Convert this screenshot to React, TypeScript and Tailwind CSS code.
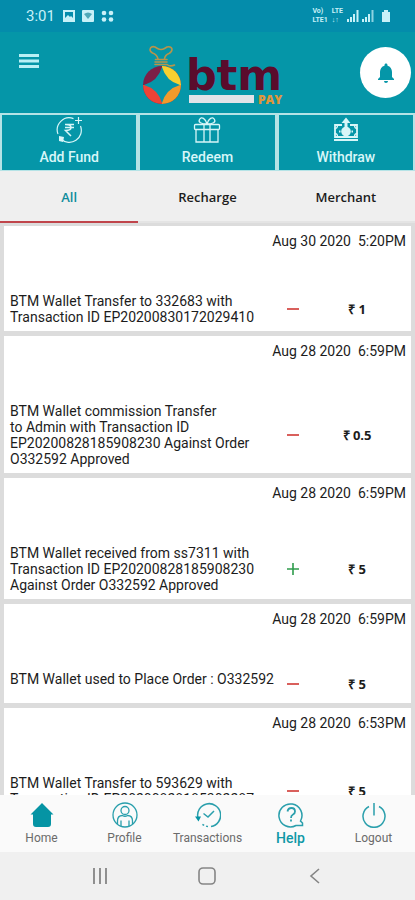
import { useState } from "react"
import type { ReactNode } from "react"
import { MdNotifications } from "react-icons/md"

interface Transaction {
    id: number;
    date: string;
    time: string;
    lines: string[];
    type: "debit" | "credit";
    amount: string;
}

const transactions: Transaction[] = [
    {
        id: 1,
        date: "Aug 30 2020",
        time: "5:20PM",
        lines: ["BTM Wallet Transfer to 332683 with", "Transaction ID EP20200830172029410"],
        type: "debit",
        amount: "1"
    },
    {
        id: 2,
        date: "Aug 28 2020",
        time: "6:59PM",
        lines: [
            "BTM Wallet commission Transfer",
            "to Admin with Transaction ID",
            "EP20200828185908230 Against Order",
            "O332592 Approved"
        ],
        type: "debit",
        amount: "0.5"
    },
    {
        id: 3,
        date: "Aug 28 2020",
        time: "6:59PM",
        lines: [
            "BTM Wallet received from ss7311 with",
            "Transaction ID EP20200828185908230",
            "Against Order O332592 Approved"
        ],
        type: "credit",
        amount: "5"
    },
    {
        id: 4,
        date: "Aug 28 2020",
        time: "6:59PM",
        lines: ["BTM Wallet used to Place Order : O332592"],
        type: "debit",
        amount: "5"
    },
    {
        id: 5,
        date: "Aug 28 2020",
        time: "6:53PM",
        lines: ["BTM Wallet Transfer to 593629 with", "Transaction ID EP20200828185302287"],
        type: "debit",
        amount: "5"
    }
]

const tabs: string[] = ["All", "Recharge", "Merchant"]

const StatusBar = () => (
    <div className="flex h-8 shrink-0 items-center justify-between bg-[#048cab] pl-[26px] pr-6 text-[#c8f1f8]">
        <div className="flex items-center gap-2">
            <span className="text-[15px] leading-4">3:01</span>
            <svg width="52" height="14" viewBox="0 0 52 14" fill="currentColor">
                <path fillRule="evenodd" d="M0 1h12v12H0zM2 3v6l3-3 2 2 1-1 2 2V3z" />
                <rect x="19" y="1" width="12" height="12" rx="1" />
                <path d="M21 5q4-3 8 0l-4 5z" fill="#4fa9b8" />
                <circle cx="41" cy="4" r="2.3" />
                <circle cx="48" cy="4" r="2.3" />
                <circle cx="41" cy="10.5" r="2.3" />
                <circle cx="48" cy="10.5" r="2.3" />
            </svg>
        </div>
        <div className="flex items-center gap-1">
            <div className="grid grid-cols-[auto_auto] gap-x-1 text-[7px] font-bold leading-[9px]">
                <span>Vo)</span>
                <span>LTE</span>
                <span>LTE1</span>
                <span>↓↑</span>
            </div>
            <svg width="44" height="14" viewBox="0 0 44 14" fill="currentColor">
                <path d="M0 10h2v3H0zM3 8h2v5H3zM6 5h2v8H6zM9.5 1h2v12h-2z" />
                <path d="M15 10h2v3h-2zM18 8h2v5h-2zM21 5h2v8h-2z" />
                <path d="M24.5 1h2v12h-2z" opacity=".7" />
                <path d="M37 1h4v2h2v10h-8V3h2z" />
            </svg>
        </div>
    </div>
)

const Logo = () => (
    <svg width="142" height="62" viewBox="0 0 142 62" className="mt-[6px]" role="img" aria-label="btm pay">
        {/* money bag */}
        <g fill="none" stroke="#b8944a" strokeWidth="1.6" strokeLinecap="round" strokeLinejoin="round">
            <path d="M16 14 Q15 9.5 10.5 8 Q7 6 8.5 3 Q10 1 13 2 L15.5 3.5 Q19 5.5 22.5 3.5 L25 2 Q29 1 30 4 Q30 7 27 8.5 Q23 10 22.5 14" />
            <path d="M13.5 14.5H25 M13 17H25 M13 19.5H25 Q28 22 32.5 20" />
        </g>
        <circle cx="20" cy="40" r="19" fill="#7c1f47" />
        <path d="M20 21A19 19 0 0 1 39 40H20z" fill="#f8d030" />
        <path d="M1 40A19 19 0 0 0 20 59V40z" fill="#ee4336" />
        <path d="M39 40A19 19 0 0 1 20 59V40z" fill="#f29a2b" />
        <path d="M20 22Q24 36 38 40Q24 44 20 58Q16 44 2 40Q16 36 20 22z" fill="#0596a8" />
        <text x="44" y="45" className="font-['DejaVu_Sans'] text-[43px] font-bold" fill="#5a0c2c">
            btm
        </text>
        <rect x="47" y="50" width="65" height="8" fill="#e2e3e8" />
        <text x="116" y="59" className="font-['Open_Sans'] text-[12px] font-extrabold" fill="#e0963c">
            PAY
        </text>
    </svg>
)

const AddFundIcon = () => (
    <svg width="28" height="28" viewBox="0 0 28 28" fill="none" stroke="currentColor" strokeWidth="1.2">
        <path d="M18.5 2.6A12 12 0 0 0 3 18M6 23A12 12 0 0 0 25.5 10" />
        <path d="M23.5 1v7M20 4.5h7" />
        <path d="M4 20l5 1-1 5-4-1z" fill="currentColor" stroke="none" />
        <path d="M10 8.5h9M10 11.5h9M10.5 8.5q5.5 0 5.5 3t-5.5 3l5.500 5.500" strokeWidth="1.5" />
    </svg>
)

const RedeemIcon = () => (
    <svg width="28" height="28" viewBox="0 0 28 28" fill="none" stroke="currentColor" strokeWidth="1.3">
        <rect x="1.5" y="8.5" width="25" height="5" rx="1" />
        <path d="M3 13.5v12.5h22V13.5M11 8.5v17.5M17 8.5v17.5" />
        <path d="M14 8C8 8 5 6 6.5 3.5 8.5 0 12.5 2.5 14 8ZM14 8c6 0 9-2 7.5-4.5C19.5 0 15.5 2.5 14 8Z" />
    </svg>
)

const WithdrawIcon = () => (
    <svg width="28" height="28" viewBox="0 0 28 28" fill="none" stroke="currentColor" strokeWidth="1.8">
        <path d="M10 9H3v12h22V9h-7M2 24h24" />
        <path d="M2.5 12.5q3 0 3-3M25.500 12.500q-3 0-3-3M2.500 17.500q3 0 3 3M25.500 17.500q-3 0-3 3" strokeWidth="1.3" />
        <circle cx="14" cy="15.5" r="4.8" fill="currentColor" stroke="none" />
        <path d="M14 1.5l-4.500 5.500h3V14h3V7h3z" fill="currentColor" stroke="none" />
        <path d="M7 15.5h1.500M19.500 15.500h1.500" />
    </svg>
)

const HomeIcon = () => (
    <svg width="26" height="26" viewBox="0 0 26 26" fill="#0594a4">
        <path d="M13 1L1.5 12.5H4V22q0 3 3 3h12q3 0 3-3v-9.5h2.5z" />
    </svg>
)

const ProfileIcon = () => (
    <svg width="26" height="26" viewBox="0 0 26 26" fill="none" stroke="#2a9fac" strokeWidth="1.3">
        <circle cx="13" cy="13" r="12" />
        <circle cx="13" cy="8.5" r="4" />
        <path d="M5.5 22v-3q0-5.5 5-5.5 2.5 1.5 5 0 5 0 5 5.5v3M9 18.5V24M17 18.5V24" />
    </svg>
)

const TransactionsIcon = () => (
    <svg width="26" height="26" viewBox="0 0 26 26" fill="none" stroke="#2a9fac" strokeWidth="1.5">
        <path d="M3 16A11.5 11.5 0 1 1 16 24.5" />
        <path d="M13 24.5A11.5 11.5 0 0 1 6 21" strokeDasharray="2 2" />
        <path d="M8.5 11.5l4.5 3.5 6-6" />
        <path d="M0 14.5h6l-2.5 5z" fill="#0594a4" stroke="none" />
    </svg>
)

const HelpIcon = () => (
    <svg width="26" height="26" viewBox="0 0 26 26" fill="none" stroke="#2a9fac" strokeWidth="1.5">
        <path d="M22.5 19A11.5 11.5 0 1 0 18 23.500H24.500V21z" />
        <path d="M9.5 9.5q.5-3.5 4-3.5t3.5 3.5q0 2-2 3t-2 3.5M13 17.5v2" strokeWidth="1.8" />
    </svg>
)

const LogoutIcon = () => (
    <svg width="26" height="26" viewBox="0 0 26 26" fill="none" stroke="#2a9fac" strokeWidth="1.5">
        <path d="M8 4.5A11 11 0 1 0 18 4.5M13 1v12.5" />
    </svg>
)

const actions: { label: string; icon: ReactNode }[] = [
    { label: "Add Fund", icon: <AddFundIcon /> },
    { label: "Redeem", icon: <RedeemIcon /> },
    { label: "Withdraw", icon: <WithdrawIcon /> }
]

const navItems: { label: string; icon: ReactNode }[] = [
    { label: "Home", icon: <HomeIcon /> },
    { label: "Profile", icon: <ProfileIcon /> },
    { label: "Transactions", icon: <TransactionsIcon /> },
    { label: "Help", icon: <HelpIcon /> },
    { label: "Logout", icon: <LogoutIcon /> }
]

const TransactionCard = ({ item }: { item: Transaction }) => (
    <li className="bg-white pb-[6px] pt-[7px]">
        <p className="h-[60px] whitespace-pre pr-[5px] text-right text-[14px] leading-4">
            {item.date}{"  "}{item.time}
        </p>
        <div className="grid min-h-[26px] grid-cols-[1fr_22px_106px] items-center pr-px">
            <p className="self-start whitespace-pre pl-[6px] text-[14px] leading-4">
                {item.lines.join("\n")}
            </p>
            <svg
                width="12"
                height="12"
                viewBox="0 0 12 12"
                className="justify-self-center"
                role="img"
                aria-label={item.type}
            >
                {item.type === "debit"
                    ? <path d="M0 6h12" stroke="#d9605c" strokeWidth="2" />
                    : <path d="M0 6h12M6 0v12" stroke="#2f9c4c" strokeWidth="1.6" />
                }
            </svg>
            <span className="text-center font-['Open_Sans'] text-[13px] font-bold leading-4">
                ₹ {item.amount}
            </span>
        </div>
    </li>
)

const App = () => {
    const [activeTab, setActiveTab] = useState<string>("All")
    const [activeNav, setActiveNav] = useState<string>("Help")

    return (
        <div className="flex h-screen flex-col overflow-hidden bg-[#dcdcdc] font-[Roboto,sans-serif] text-[#1c1c1c]">
            <StatusBar />

            {/* HEADER */}
            <header className="flex h-[81px] shrink-0 items-center justify-between bg-[#0596a8] pl-[19px] pr-1">
                <button type="button" aria-label="Menu" className="mb-6 w-[47px] cursor-pointer text-[#b9f0f5]">
                    <svg width="20" height="16" viewBox="0 0 20 16" fill="currentColor">
                        <path d="M0 1h20v3H0zM0 6.5h20v3H0zM0 12h20v3H0z" />
                    </svg>
                </button>
                <Logo />
                <button
                    type="button"
                    aria-label="Notifications"
                    className="flex h-[51px] w-[51px] cursor-pointer items-center justify-center rounded-full bg-white text-[#0596a8]"
                >
                    <MdNotifications size={24} />
                </button>
            </header>

            {/* ACTIONS */}
            <div className="grid shrink-0 grid-cols-3 gap-1 bg-[#b5e3e6] px-[2px] pb-px pt-[2px]">
                {actions.map((action) => (
                    <button
                        key={action.label}
                        type="button"
                        className="flex h-[55px] cursor-pointer flex-col items-center bg-[#0596a8] pt-px text-[#d8f6f8]"
                    >
                        {action.icon}
                        <span className="mt-[5px] text-[14px] font-medium leading-4">{action.label}</span>
                    </button>
                ))}
            </div>

            {/* TABS */}
            <div role="tablist" className="grid shrink-0 grid-cols-3 bg-[#efefef]">
                {tabs.map((tab) => (
                    <button
                        key={tab}
                        type="button"
                        role="tab"
                        aria-selected={activeTab === tab}
                        onClick={() => setActiveTab(tab)}
                        className={`h-[52px] cursor-pointer border-b-2 pt-[2px] font-['Open_Sans'] text-[13px] font-semibold leading-4 ${
                            activeTab === tab
                                ? "border-[#c0454b] text-[#0f8c9c]"
                                : "border-[#e4e4e4] text-[#1c1c1c]"
                        }`}
                    >
                        {tab}
                    </button>
                ))}
            </div>

            {/* TRANSACTIONS */}
            <ul className="flex min-h-0 flex-1 flex-col gap-[5px] overflow-y-auto px-1 pt-[3px] [scrollbar-width:none]">
                {transactions.map((item) => (
                    <TransactionCard key={item.id} item={item} />
                ))}
            </ul>

            {/* BOTTOM NAV */}
            <nav className="grid h-[57px] shrink-0 grid-cols-5 bg-[#fafafa]">
                {navItems.map((nav) => (
                    <button
                        key={nav.label}
                        type="button"
                        onClick={() => setActiveNav(nav.label)}
                        className="flex cursor-pointer flex-col items-center pt-[7px]"
                    >
                        {nav.icon}
                        <span
                            className={`mt-[2px] leading-4 ${
                                activeNav === nav.label
                                    ? "text-[14px] font-medium text-[#0f98a6]"
                                    : "text-[12px] text-[#6b6b6b]"
                            }`}
                        >
                            {nav.label}
                        </span>
                    </button>
                ))}
            </nav>

            {/* SYSTEM KEYS */}
            <div className="grid h-12 shrink-0 grid-cols-3 items-center justify-items-center bg-[#f0f0f0] px-[46px] text-[#858585]">
                <svg width="18" height="18" viewBox="0 0 18 18" fill="none" stroke="currentColor" strokeWidth="1.8">
                    <path d="M3 1v16M9 1v16M15 1v16" />
                </svg>
                <svg width="18" height="18" viewBox="0 0 18 18" fill="none" stroke="currentColor" strokeWidth="1.6">
                    <rect x="1" y="1" width="16" height="16" rx="4" />
                </svg>
                <svg width="18" height="18" viewBox="0 0 18 18" fill="none" stroke="currentColor" strokeWidth="1.6">
                    <path d="M13 2L5 9l8 7" />
                </svg>
            </div>
        </div>
    )
}

export default App
